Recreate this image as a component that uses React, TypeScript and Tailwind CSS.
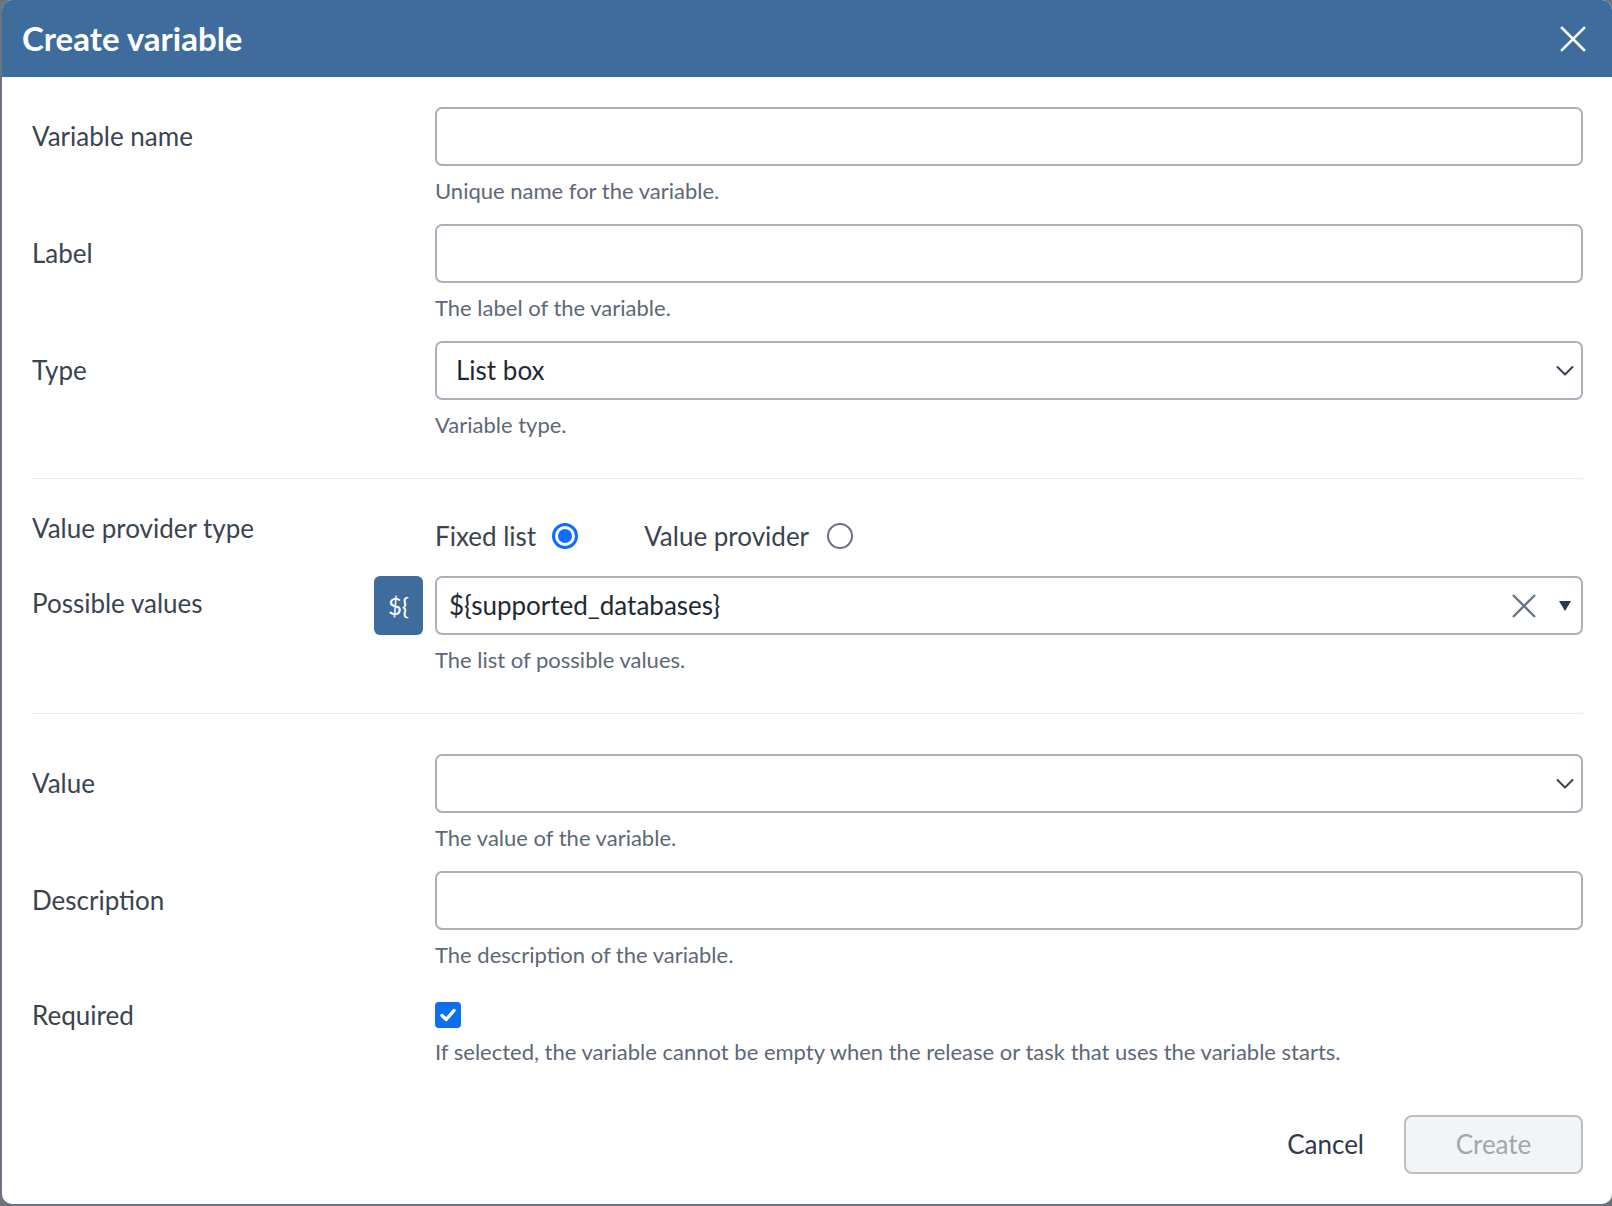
import React from "react";

const font = { fontFamily: "Lato, 'Noto Sans', Arial, sans-serif" };

function Help({ children }: { children: React.ReactNode }) {
  return <div className="mt-[12px] text-[22px] leading-[26px] text-[#5d6877]">{children}</div>;
}

function Label({ children }: { children: React.ReactNode }) {
  return <div className="flex h-[59px] items-center text-[26px] text-[#3a4451]">{children}</div>;
}

function Chevron() {
  return (
    <svg width="18" height="11" viewBox="0 0 18 11" className="absolute right-[7px] top-1/2 -translate-y-1/2">
      <path d="M1.5 1.5 L9 9 L16.5 1.5" fill="none" stroke="#374151" strokeWidth="2" strokeLinecap="round" strokeLinejoin="round" />
    </svg>
  );
}

function Field({ children, select }: { children?: React.ReactNode; select?: boolean }) {
  return (
    <div className="relative flex h-[59px] items-center rounded-[7px] border-2 border-[#aab1b9] bg-white pl-[19px] text-[26px] text-[#1f2933]">
      {children}
      {select && <Chevron />}
    </div>
  );
}

function Radio({ on }: { on?: boolean }) {
  return on ? (
    <span className="flex h-[26px] w-[26px] items-center justify-center rounded-full border-[3px] border-[#0d6efd] bg-white">
      <span className="block h-[14px] w-[14px] rounded-full bg-[#0d6efd]" />
    </span>
  ) : (
    <span className="block h-[26px] w-[26px] rounded-full border-2 border-[#6b7280] bg-white" />
  );
}

export default function App() {
  return (
    <div className="h-[1206px] w-full bg-[#6b7280] pl-[2px]" style={font}>
      <div className="h-[1204px] w-[1610px] overflow-hidden rounded-[10px] bg-white">
        {/* title bar */}
        <div className="flex h-[77px] items-center justify-between bg-[#3d6c9d] pl-[20px] pr-[26px]">
          <h1 className="text-[33px] font-bold text-white">Create variable</h1>
          <svg width="26" height="26" viewBox="0 0 26 26">
            <path d="M2 2 L24 24 M24 2 L2 24" stroke="#ffffff" strokeWidth="2.6" strokeLinecap="square" />
          </svg>
        </div>

        <div className="pl-[30px] pr-[29px] pt-[30px]">
          <div className="grid grid-cols-[403px_1fr]">
            <Label>Variable name</Label>
            <div className="mb-[20px]">
              <Field />
              <Help>Unique name for the variable.</Help>
            </div>

            <Label>Label</Label>
            <div className="mb-[20px]">
              <Field />
              <Help>The label of the variable.</Help>
            </div>

            <Label>Type</Label>
            <div>
              <Field select>List box</Field>
              <Help>Variable type.</Help>
            </div>
          </div>

          <div className="mt-[40px] h-px bg-[#ececec]" />

          {/* value provider */}
          <div className="mt-[34px] grid grid-cols-[403px_1fr]">
            <div className="text-[26px] leading-[30px] text-[#3a4451]">Value provider type</div>
            <div className="mt-[8px] flex h-[30px] items-center text-[26px] text-[#3a4451]">
              <span>Fixed list</span>
              <span className="ml-[16px]"><Radio on /></span>
              <span className="ml-[66px]">Value provider</span>
              <span className="ml-[18px]"><Radio /></span>
            </div>
          </div>

          <div className="mt-[25px] grid grid-cols-[403px_1fr]">
            <div className="flex h-[59px] items-center justify-between pr-[12px]">
              <span className="-mt-[4px] text-[26px] text-[#3a4451]">Possible values</span>
              <span className="flex h-[59px] w-[49px] items-center justify-center rounded-[6px] bg-[#3d6c9d] text-[24px] text-white">
                {"${"}
              </span>
            </div>
            <div>
              <div className="relative flex h-[59px] items-center rounded-[7px] border-2 border-[#aab1b9] bg-white pl-[12px] text-[26px] text-[#1f2933]">
                {"${supported_databases}"}
                <svg width="26" height="26" viewBox="0 0 26 26" className="absolute right-[44px] top-1/2 -translate-y-1/2">
                  <path d="M2 2 L24 24 M24 2 L2 24" stroke="#6b7785" strokeWidth="2.4" />
                </svg>
                <svg width="12" height="10" viewBox="0 0 12 10" className="absolute right-[10px] top-1/2 -translate-y-1/2">
                  <path d="M0 0 H12 L6 10 Z" fill="#2d3748" />
                </svg>
              </div>
              <Help>The list of possible values.</Help>
            </div>
          </div>

          <div className="mt-[40px] h-px bg-[#ececec]" />

          <div className="mt-[40px] grid grid-cols-[403px_1fr]">
            <Label>Value</Label>
            <div className="mb-[20px]">
              <Field select />
              <Help>The value of the variable.</Help>
            </div>

            <Label>Description</Label>
            <div>
              <Field />
              <Help>The description of the variable.</Help>
            </div>
          </div>

          <div className="mt-[32px] grid grid-cols-[403px_1fr]">
            <div className="flex h-[30px] items-center text-[26px] text-[#3a4451]">Required</div>
            <div>
              <div className="flex h-[30px] items-center">
                <span className="flex h-[26px] w-[26px] items-center justify-center rounded-[4px] bg-[#0b6ff0]">
                  <svg width="18" height="18" viewBox="0 0 18 18">
                    <path d="M3 9.5 L7.2 13.5 L15 4.5" fill="none" stroke="#ffffff" strokeWidth="3.4" strokeLinecap="round" strokeLinejoin="round" />
                  </svg>
                </span>
              </div>
              <div className="mt-[9px] text-[22px] leading-[26px] text-[#5d6877]">
                If selected, the variable cannot be empty when the release or task that uses the variable starts.
              </div>
            </div>
          </div>

          <div className="mt-[50px] flex items-center justify-end gap-[40px]">
            <button className="text-[26px] text-[#2d3a4a]">Cancel</button>
            <button className="h-[59px] w-[179px] rounded-[8px] border-2 border-[#b9bfc6] bg-[#f3f4f6] text-[26px] text-[#a0a7b0]">
              Create
            </button>
          </div>
        </div>
      </div>
    </div>
  );
}
